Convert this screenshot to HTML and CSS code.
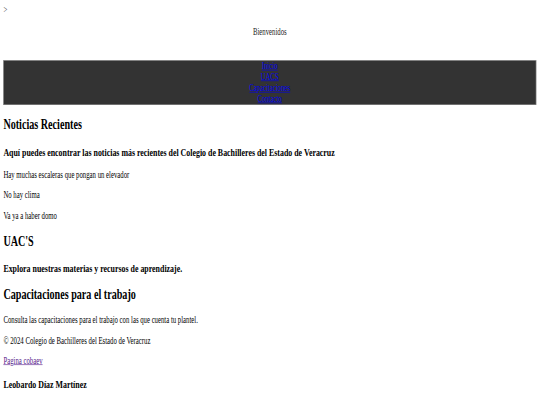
FILE: index.html
```html
<!DOCTYPE html>
<html lang="es">
<head>
<meta charset="utf-8">
<title>COBAEV</title>
<link rel="stylesheet" href="styles.css">
</head>
<body>
<div class="frame">
<div class="page">
  <div class="stray">&gt;</div>
  <header class="top">
    <p class="welcome">Bienvenidos</p>
  </header>
  <nav class="menu">
    <a href="#">Inicio</a>
    <a href="#">UACS</a>
    <a href="#">Capacitaciones</a>
    <a href="#">Contacto</a>
  </nav>
  <section class="block">
    <h2>Noticias Recientes</h2>
    <h3>Aquí puedes encontrar las noticias más recientes del Colegio de Bachilleres del Estado de Veracruz</h3>
    <p>Hay muchas escaleras que pongan un elevador</p>
    <p>No hay clima</p>
    <p>Va ya a haber domo</p>
  </section>
  <section class="block">
    <h2>UAC'S</h2>
    <h3>Explora nuestras materias y recursos de aprendizaje.</h3>
  </section>
  <section class="block">
    <h2>Capacitaciones para el trabajo</h2>
    <p>Consulta las capacitaciones para el trabajo con las que cuenta tu plantel.</p>
  </section>
  <footer class="foot">
    <p>© 2024 Colegio de Bachilleres del Estado de Veracruz</p>
    <p><a class="visited" href="#">Pagina cobaev</a></p>
    <h3>Leobardo Díaz Martínez</h3>
  </footer>
</div>
</div>
</body>
</html>
```

FILE: styles.css
```css
html, body {
  margin: 0;
  padding: 0;
  overflow: hidden;
  background: #fff;
}

.frame {
  width: 540px;
  height: 405px;
  overflow: hidden;
}

.page {
  width: 1279px;
  box-sizing: border-box;
  padding: 8px 8px 6px;
  font-family: "Liberation Serif", "Times New Roman", serif;
  font-size: 16px;
  color: #000;
  transform: scale(0.421875, 0.5965);
  transform-origin: 0 0;
}

.stray {
  line-height: 18.4px;
  color: #333;
}

.top {
  margin: 18px 0 38px;
  text-align: center;
}

.welcome {
  margin: 0;
  line-height: 18.4px;
  color: #222;
}

.menu {
  display: flex;
  flex-direction: column;
  align-items: center;
  background: #333;
  border: 1.5px solid #999;
}

.menu a {
  color: #0000ee;
  line-height: 18.4px;
}

.block h2,
.block h3,
.block p,
.foot p,
.foot h3 {
  line-height: 1.15;
}

h2 {
  font-size: 24px;
  margin: 19.92px 0;
}

h3 {
  font-size: 18.72px;
  margin: 18.72px 0;
}

h3:last-child {
  margin-bottom: 0;
}

p {
  margin: 16px 0;
}

.visited {
  color: #551a8b;
}
```
